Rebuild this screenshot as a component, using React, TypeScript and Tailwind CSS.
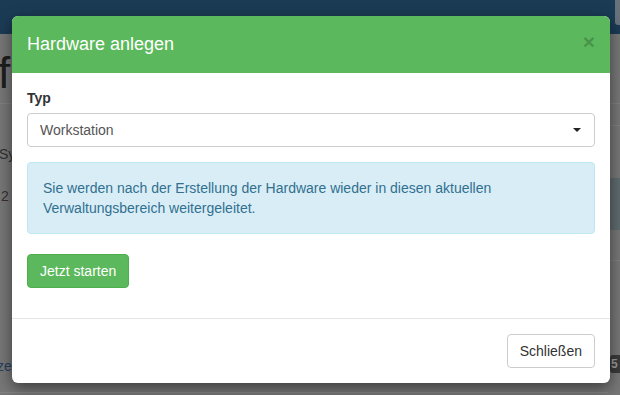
export default function App() {
  return (
    <div className="relative h-[395px] w-[620px] overflow-hidden bg-[#777777] font-['Liberation_Sans',Arial,sans-serif] text-[14px] leading-[20px] text-[#333]">
      {/* dimmed page behind the dialog */}
      <div className="flex h-[34px] justify-end bg-[#1b3b55]">
        <div className="mr-[-4px] h-[25px] w-[9px] rounded-bl-[3px] bg-[#67737c]" />
      </div>
      <div className="flex">
        <div className="flex-1">
          <div className="ml-[-2px] mt-[14px] text-[44px] leading-[50px] text-[#1e1e1e]">f</div>
          <div className="mt-[5px] border-t border-[#808080]" />
          <div className="ml-[-1px] mt-[40px] text-[#2f2f2f]">Sy</div>
          <div className="ml-[-3px] mt-[22px] text-[#3a2f2f]">.2</div>
          <div className="ml-[-3px] mt-[150px] text-[#24415e]">ze</div>
          <div className="mt-[16px] border-t border-[#838383]" />
        </div>
        <div className="w-[12px]">
          <div className="mt-[69px] border-t border-[#818181]" />
          <div className="mt-[21px] border-t border-[#818181]" />
          <div className="mt-[52px] h-[52px] bg-[#5f6b6f]" />
          <div className="mt-[30px] border-t border-[#818181]" />
          <div className="ml-[2px] mt-[94px] flex h-[18px] items-center rounded-l-[3px] bg-[#3a3a3a] pl-[1px] text-[12px] font-bold text-[#9a9a9a]">
            5
          </div>
        </div>
      </div>

      {/* dialog */}
      <div className="absolute left-[12px] top-[16px] w-[598px] overflow-hidden rounded-[6px] bg-white shadow-[0_5px_15px_rgba(0,0,0,0.5)]">
        <div className="flex items-center justify-between bg-[#5cb85c] p-[15px]">
          <h4 className="text-[18px] leading-[27px] text-white">Hardware anlegen</h4>
          <button className="mt-[-6px] text-[21px] font-bold leading-none text-black opacity-20">×</button>
        </div>
        <div className="p-[15px] pb-[30px]">
          <label className="mb-[5px] block font-bold">Typ</label>
          <div className="mb-[15px] flex h-[34px] items-center justify-between rounded-[4px] border border-[#ccc] pl-[12px] pr-[13px] text-[#555]">
            <span>Workstation</span>
            <span className="h-0 w-0 border-x-[4px] border-t-[4px] border-x-transparent border-t-[#222]" />
          </div>
          <div className="mb-[20px] rounded-[4px] border border-[#bce8f1] bg-[#d9edf7] p-[15px] text-[#31708f]">
            Sie werden nach der Erstellung der Hardware wieder in diesen aktuellen Verwaltungsbereich weitergeleitet.
          </div>
          <button className="h-[34px] rounded-[4px] border border-[#4cae4c] bg-[#5cb85c] px-[12px] text-white">
            Jetzt starten
          </button>
        </div>
        <div className="flex justify-end border-t border-[#e5e5e5] p-[15px]">
          <button className="h-[34px] rounded-[4px] border border-[#ccc] bg-white px-[12px] text-[#333]">
            Schließen
          </button>
        </div>
      </div>
    </div>
  );
}
